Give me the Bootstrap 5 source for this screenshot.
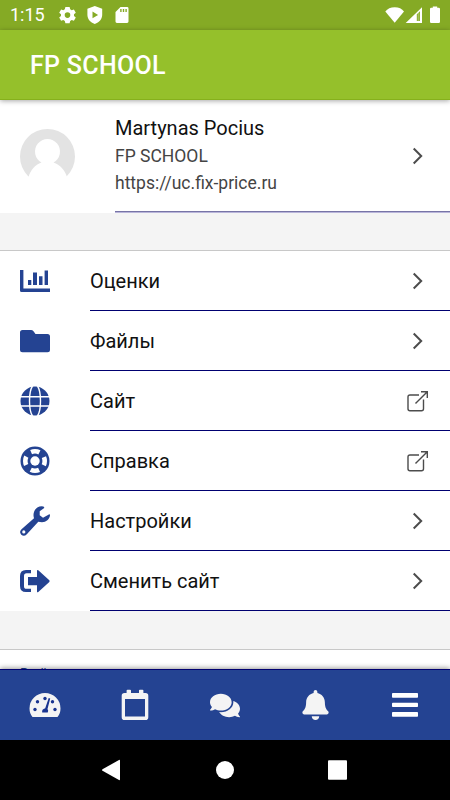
<!DOCTYPE html>
<html lang="ru">
<head>
<meta charset="utf-8">
<meta name="viewport" content="width=device-width, initial-scale=1">
<title>FP SCHOOL</title>
<link href="https://cdn.jsdelivr.net/npm/bootstrap@5.3.0/dist/css/bootstrap.min.css" rel="stylesheet">
<style>
body{font-family:Roboto,"Noto Sans",sans-serif;background:#f4f4f4;color:#111;letter-spacing:0}
.screen{width:450px;height:800px}
.status{height:30px;background:#85aa25;color:#fff;font-size:18px;line-height:30px;padding-left:10px}
.status svg,.row-icon,.tab svg,.sys svg,.end-icon{display:block;flex:none}
.app-title{height:70px;background:#95c02b;color:#fff;padding:2px 0 0 30px;font-size:25px;font-weight:500;letter-spacing:.3px;border-bottom:1px solid #86b01c;box-shadow:0 1px 5px rgba(0,0,0,.35);z-index:2}
.profile{height:113px;padding-left:20px}
.profile-body{margin-left:40px;margin-bottom:1px;border-bottom:1px solid #7774a6;box-shadow:0 1px #b9b5da;padding-right:20px}
.person{font-size:20px;line-height:29px}
.site{font-size:17.5px;line-height:27px;color:#444}
.gap-band{height:37px}
.gap-band.tall{height:38px}
.menu{border-top:1px solid #c8c8c8}
.item{height:60px;padding-left:20px;font-size:20px}
.item-body{margin-left:40px;border-bottom:1px solid #000070;padding-right:19px}
.row-icon{fill:#244392;color:#244392}
.end-icon{stroke:#4c4c4c;fill:none}
.logout{height:20px;border-top:1px solid #c8c8c8;color:#244392;font-size:14px;line-height:21px;padding:14px 0 0 20px}
.tabs{height:71px;background:#244392;border-top:1px solid #000070;box-shadow:0 -1px 5px rgba(0,0,0,.4);z-index:2}
.tab svg{fill:#f4f4f4}
.sys{height:60px;background:#000}
</style>
</head>
<body>
<div class="screen d-flex flex-column overflow-hidden">
  <div class="status d-flex align-items-center flex-shrink-0">
    <span>1:15</span>
    <svg width="90" height="30" viewBox="44.500 0 90 30" fill="#fff">
      <path fill-rule="evenodd" d="M64.900 7h4.200l.6 2.300 1.500.9 2.200-.7 1.900 3.300-1.800 1.500v1.600l1.800 1.500-1.900 3.300-2.200-.7-1.500.9-.6 2.300h-4.200l-.6-2.300-1.500-.9-2.200.7-1.900-3.300 1.800-1.500v-1.600l-1.800-1.500 1.900-3.300 2.200.7 1.500-.9zM67 12.300a2.800 2.800 0 1 0 0 5.600 2.800 2.800 0 0 0 0-5.600z"/>
      <path fill-rule="evenodd" d="M94.300 6l7.400 2.800v6c0 4.300-3 7.800-7.400 9.200-4.400-1.400-7.400-4.900-7.400-9.200v-6zM92 11.500v6.700l5.600-3.300z"/>
      <path fill-rule="evenodd" d="M120 7h6.600q1.400 0 1.400 1.400v13.200q0 1.400-1.400 1.400h-10.200q-1.400 0-1.400-1.400V12zM119.700 9v3h1.400V9zM122.300 9v3h1.400V9zM124.900 9v3h1.400V9z"/>
    </svg>
    <svg class="ms-auto" width="70" height="30" viewBox="380 0 70 30" fill="#fff">
      <path d="M385.300 11.500Q388.500 7.200 394.700 7.200T404 11.500L394.700 22.700z"/>
      <path fill-rule="evenodd" d="M405.700 23L422 7.200V23zM416.800 14.200V21h3.200V11.200z"/>
      <rect x="417.600" y="12.500" width="1.800" height="8.500" opacity=".25"/>
      <path d="M432.800 6.500h4.400v1.300h1.600q1.200 0 1.200 1.200v12.700q0 1.300-1.200 1.300h-7.600q-1.200 0-1.200-1.300V9q0-1.200 1.200-1.200h1.600z"/>
    </svg>
  </div>
  <header class="app-title d-flex align-items-center position-relative flex-shrink-0">FP SCHOOL</header>

  <section class="profile bg-white d-flex flex-shrink-0">
    <svg class="align-self-center flex-shrink-0" width="55" height="55" viewBox="0 0 55 55">
      <circle cx="27.500" cy="27.500" r="27.500" fill="#e3e3e3"/>
      <path fill="#fff" d="M8.500 48C10.500 41 15 36 21.500 33.500a12.500 12.500 0 1 1 12 0C40 36 45 41 47 48V55H8.500z"/>
    </svg>
    <div class="profile-body flex-grow-1 d-flex align-items-center justify-content-between">
      <div>
        <div class="person">Martynas Pocius</div>
        <div class="site">FP SCHOOL</div>
        <div class="site">https://uc.fix-price.ru</div>
      </div>
      <svg class="end-icon" width="26" height="26" viewBox="0 0 26 26"><path stroke-width="2" d="M9.700 5.500L17.200 13 9.700 20.500"/></svg>
    </div>
  </section>
  <div class="gap-band flex-shrink-0"></div>

  <nav class="menu bg-white flex-shrink-0">
    <div class="item d-flex align-items-center">
      <svg class="row-icon" width="30" height="30" viewBox="0 0 30 30"><path d="M0 4h3.400v18.600H30V26H1.500Q0 26 0 24.500zM8 14h3.300v5H8zM13 6.500h4v12.500h-4zM19 10.300h3.500v8.700H19zM24.600 4.500H28v14.500h-3.400z"/></svg>
      <div class="item-body flex-grow-1 h-100 d-flex align-items-center justify-content-between"><span>Оценки</span>
        <svg class="end-icon" width="26" height="26" viewBox="0 0 26 26"><path stroke-width="2" d="M8.700 5.500L16.200 13 8.700 20.500"/></svg></div>
    </div>
    <div class="item d-flex align-items-center">
      <svg class="row-icon" width="30" height="30" viewBox="0 0 30 30"><path d="M2.500 4H11q1.500 0 2.500 1.200L15.500 8h12Q30 8 30 10.500v13.200Q30 26.200 27.500 26.200h-25Q0 26.200 0 23.700V6.500Q0 4 2.500 4z"/></svg>
      <div class="item-body flex-grow-1 h-100 d-flex align-items-center justify-content-between"><span>Файлы</span>
        <svg class="end-icon" width="26" height="26" viewBox="0 0 26 26"><path stroke-width="2" d="M8.700 5.500L16.200 13 8.700 20.500"/></svg></div>
    </div>
    <div class="item d-flex align-items-center">
      <svg class="row-icon" width="30" height="30" viewBox="0 0 30 30"><circle cx="15" cy="15" r="14.500"/><path fill="none" stroke="#fff" stroke-width="1.400" d="M0 10.700h30M0 20h30M12.500 0C8.500 6 8.500 24 12.500 30M17.500 0c4 6 4 24 0 30"/></svg>
      <div class="item-body flex-grow-1 h-100 d-flex align-items-center justify-content-between"><span>Сайт</span>
        <svg class="end-icon" width="26" height="26" viewBox="0 0 26 26"><path stroke-width="1.400" d="M14 7H5Q3 7 3 9v11.800q0 2 2 2h11.500q2 0 2-2V11.500M10.500 15.500L22.300 3.700M16 3.700h6.300V10"/></svg></div>
    </div>
    <div class="item d-flex align-items-center">
      <svg class="row-icon" width="30" height="30" viewBox="0 0 30 30"><circle cx="15" cy="15" r="14.500"/><circle cx="15" cy="15" r="9.700" fill="none" stroke="#fff" stroke-width="4.600" stroke-dasharray="8.600 6.636" stroke-dashoffset="4.300"/><circle cx="15" cy="15" r="4.700" fill="#fff"/></svg>
      <div class="item-body flex-grow-1 h-100 d-flex align-items-center justify-content-between"><span>Справка</span>
        <svg class="end-icon" width="26" height="26" viewBox="0 0 26 26"><path stroke-width="1.400" d="M14 7H5Q3 7 3 9v11.800q0 2 2 2h11.500q2 0 2-2V11.500M10.500 15.500L22.300 3.700M16 3.700h6.300V10"/></svg></div>
    </div>
    <div class="item d-flex align-items-center">
      <svg class="row-icon" width="30" height="30" viewBox="0 0 30 30"><path fill-rule="evenodd" d="M24.200 1.200V2L19.700 5.300V9.300L23 11.700 29.300 8.300Q30 8.200 30 9.200C29.600 13.300 26 16.200 22 16.200Q20 16.200 18.300 15.800L6.800 28.200Q4 31 1.300 28.700-1.200 26 1.500 23.200L14 12.200C12 6 16 .5 21.500.3Q24 .3 24.200 1.200zM3.800 24.300a1.600 1.600 0 1 0 0 3.200 1.600 1.600 0 0 0 0-3.200z"/></svg>
      <div class="item-body flex-grow-1 h-100 d-flex align-items-center justify-content-between"><span>Настройки</span>
        <svg class="end-icon" width="26" height="26" viewBox="0 0 26 26"><path stroke-width="2" d="M8.700 5.500L16.200 13 8.700 20.500"/></svg></div>
    </div>
    <div class="item d-flex align-items-center">
      <svg class="row-icon" width="30" height="30" viewBox="0 0 30 30"><path d="M11 4v3.300H6.500Q4 7.300 4 10v10.200q0 2.600 2.500 2.600H11V26H6q-6 0-6-6V10q0-6 6-6zM8 11h9V4.500q.3-1 1.300-.3L29.300 14.300q.7.800 0 1.600L18.300 26q-1 .7-1.300-.3V19.200H8z"/></svg>
      <div class="item-body flex-grow-1 h-100 d-flex align-items-center justify-content-between"><span>Сменить сайт</span>
        <svg class="end-icon" width="26" height="26" viewBox="0 0 26 26"><path stroke-width="2" d="M8.700 5.500L16.200 13 8.700 20.500"/></svg></div>
    </div>
  </nav>
  <div class="gap-band tall flex-shrink-0"></div>
  <div class="logout bg-white flex-shrink-0">Выйти</div>

  <nav class="tabs row row-cols-5 g-0 align-items-center flex-shrink-0 position-relative">
    <div class="col tab d-flex justify-content-center"><svg width="32" height="32" viewBox="0 0 32 32"><path d="M3.500 28Q.5 24.500.5 19.500a15.500 15.500 0 0 1 31 0Q31.500 24.500 28.500 28z"/><g fill="#1a3590"><circle cx="6" cy="20.500" r="1.700"/><circle cx="8.500" cy="12.700" r="1.700"/><circle cx="16" cy="9.500" r="1.700"/><circle cx="23.500" cy="12.700" r="1.700"/><circle cx="26" cy="20.500" r="1.700"/><path d="M19.700 9l1.500.5-2.700 10.600q1.300 1.600.2 3.400h-5.500q-.7-3.200 3-4.200z"/></g></svg></div>
    <div class="col tab d-flex justify-content-center"><svg width="32" height="32" viewBox="0 0 32 32"><path fill-rule="evenodd" d="M8.500.7h2.600q.9 0 .9.900V4h8V1.600q0-.9.900-.9h2.600q.9 0 .9.900V4H26.500Q29.300 4 29.300 6.800v21.400Q29.300 31 26.500 31h-21Q2.700 31 2.700 28.200V6.800Q2.700 4 5.500 4h2.100V1.600q0-.9.900-.9zM6 10v17.500h20V10z"/></svg></div>
    <div class="col tab d-flex justify-content-center"><svg width="30" height="27" viewBox="0 0 576 512"><path d="M416 192c0-88.400-93.100-160-208-160S0 103.600 0 192c0 34.300 14.100 65.900 38 92-13.400 30.200-35.500 54.200-35.800 54.500-2.200 2.300-2.800 5.700-1.500 8.700S4.800 352 8 352c36.600 0 66.900-12.300 88.700-25 32.200 15.700 70.300 25 111.300 25 114.900 0 208-71.600 208-160zm122 220c23.900-26 38-57.700 38-92 0-66.900-53.500-124.200-129.300-148.100.9 6.600 1.300 13.300 1.300 20.100 0 105.900-107.700 192-240 192-10.800 0-21.300-.8-31.700-1.900C207.800 439.600 281.800 480 368 480c41 0 79.100-9.200 111.300-25 21.800 12.700 52.100 25 88.700 25 3.200 0 6.100-1.900 7.300-4.800 1.300-2.900.7-6.300-1.500-8.700-.3-.3-22.400-24.200-35.800-54.500z"/></svg></div>
    <div class="col tab d-flex justify-content-center"><svg width="27" height="30" viewBox="0 0 448 512"><path d="M224 512c35.320 0 63.970-28.650 63.970-64H160.030c0 35.350 28.650 64 63.970 64zm215.390-149.710c-19.320-20.760-55.470-51.990-55.470-154.290 0-77.700-54.480-139.900-127.940-155.160V32c0-17.670-14.320-32-31.980-32s-31.980 14.330-31.980 32v20.840C118.560 68.100 64.080 130.300 64.080 208c0 102.300-36.150 133.530-55.470 154.290-6 6.450-8.660 14.160-8.610 21.710.11 16.400 12.980 32 32.100 32h383.800c19.120 0 32-15.600 32.100-32 .05-7.550-2.610-15.270-8.610-21.710z"/></svg></div>
    <div class="col tab d-flex justify-content-center"><svg width="28" height="30" viewBox="0 0 28 30"><g fill="#fff"><rect x="1" y="3" width="26" height="4.700" rx=".8"/><rect x="1" y="12.700" width="26" height="4.300" rx=".8"/><rect x="1" y="22" width="26" height="4.700" rx=".8"/></g></svg></div>
  </nav>

  <div class="sys flex-shrink-0 d-flex justify-content-center align-items-center">
    <svg width="260" height="30" viewBox="95 755 260 30" fill="#fff"><path d="M119 760q1-.5 1 .8v18.400q0 1.300-1 .8l-16.500-9.200q-1-.8 0-1.600z"/><circle cx="225" cy="770" r="9"/><rect x="328" y="760.300" width="19" height="19.400" rx="1"/></svg>
  </div>
</div>
<script src="https://cdn.jsdelivr.net/npm/bootstrap@5.3.0/dist/js/bootstrap.bundle.min.js"></script>
</body>
</html>
